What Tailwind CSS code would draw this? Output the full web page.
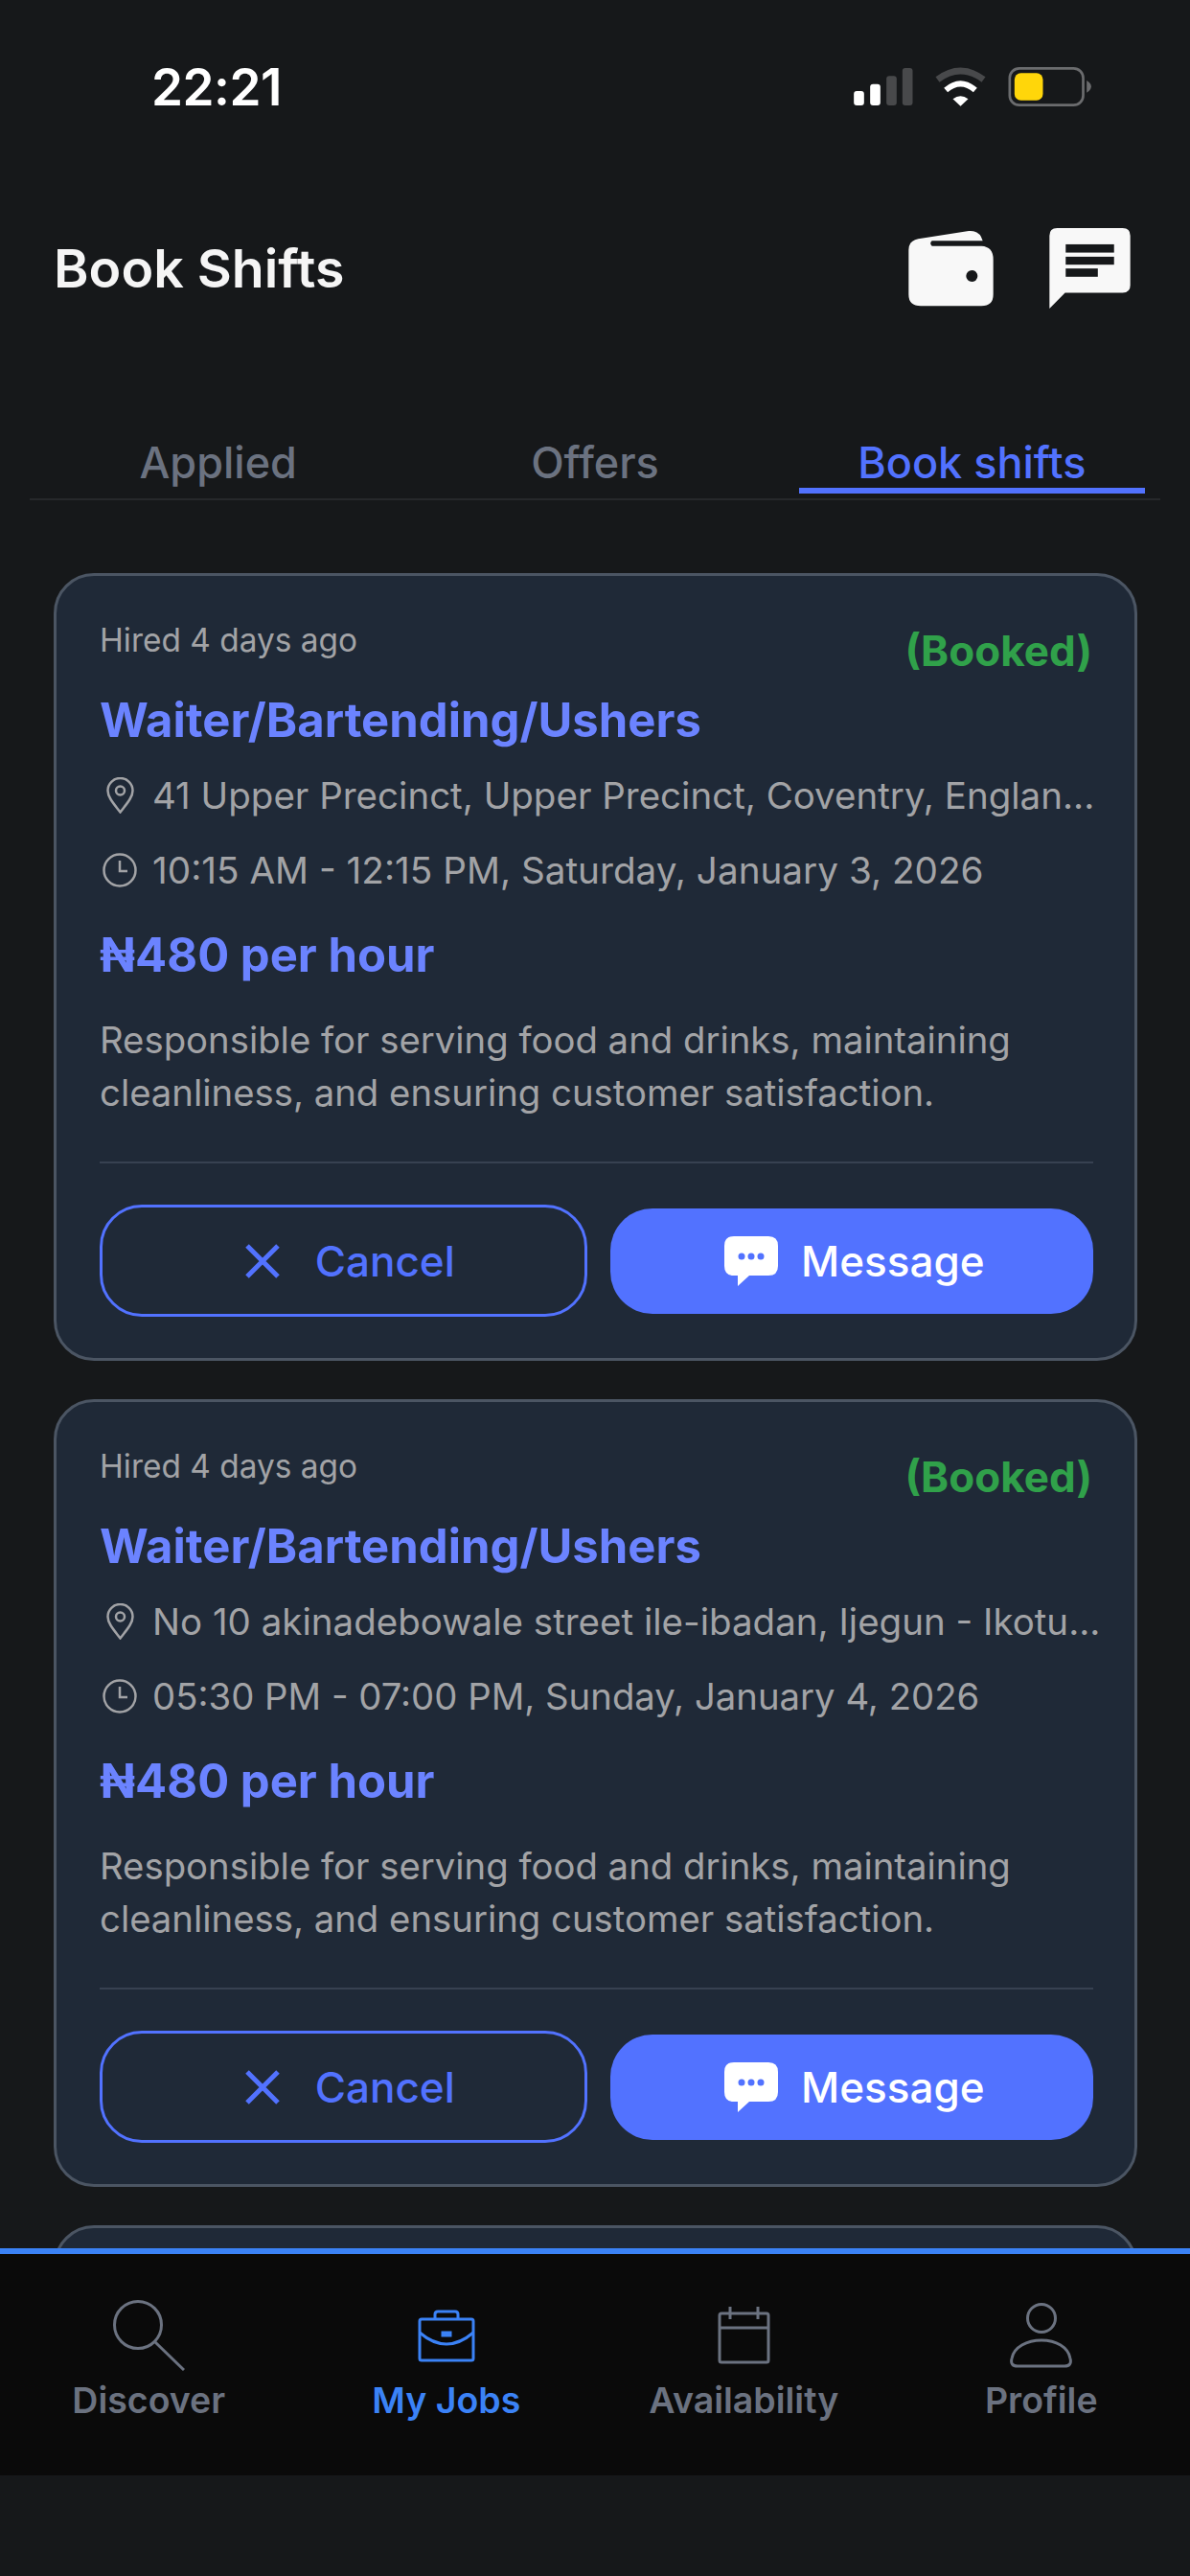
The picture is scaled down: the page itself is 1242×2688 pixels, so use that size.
<!DOCTYPE html>
<html lang="en">

<head>
  <meta charset="UTF-8">
  <meta name="viewport" content="width=device-width, initial-scale=1.0">
  <title>Book Shifts</title>
  <script src="https://cdn.jsdelivr.net/npm/@tailwindcss/browser@4"></script>
</head>

<body class="bg-[#16181a] font-['Inter',sans-serif]">
  <div class="h-[2688px] w-[1242px] flex flex-col overflow-hidden">
    <!-- Status bar -->
    <div class="h-[80px] mt-[50px] pl-[158px] pr-[103px] flex items-center justify-between shrink-0">
      <span class="text-[53px] leading-[60px] pt-[2px] font-semibold text-white tracking-[-0.5px]">22:21</span>
      <svg width="248" height="41" viewBox="93 88 743 123">
        <rect x="93" y="163" width="32" height="45" rx="9" fill="#fff"/>
        <rect x="144" y="141" width="32" height="67" rx="9" fill="#fff"/>
        <rect x="195" y="116" width="32" height="92" rx="9" fill="#48494b"/>
        <rect x="245" y="91" width="32" height="117" rx="9" fill="#48494b"/>
        <path d="M355 127 Q427 73 499 127" fill="none" stroke="#48494b" stroke-width="20"/>
        <path d="M381 160 Q427 120 473 160" fill="none" stroke="#fff" stroke-width="18"/>
        <path d="M403 188 Q427 170 451 188 L427 210 Z" fill="#fff"/>
        <rect x="581" y="92" width="230" height="115" rx="30" fill="none" stroke="#6b6c6e" stroke-width="8"/>
        <rect x="596" y="107" width="89" height="85" rx="20" fill="#ffd60a"/>
        <path d="M822 130 Q836 138 836 149 Q836 160 822 168 Z" fill="#6b6c6e"/>
      </svg>
    </div>

    <!-- Header -->
    <header class="h-[84px] mt-[108px] pl-[56px] pr-[62px] flex items-center justify-between shrink-0">
      <h1 class="text-[55.5px] leading-[60px] font-semibold text-[#f5f5f5]">Book Shifts</h1>
      <div class="flex items-center gap-[58px]">
        <svg width="89" height="80" viewBox="262 598 265 240">
          <path d="M262 660 Q262 632 292 626 L450 601 Q485 598 494 632 L335 632 Q326 640 335 648 L490 648 Q527 650 527 690 L527 800 Q527 836 490 836 L300 836 Q262 836 262 800 Z" fill="#f8f8f8"/>
          <circle cx="460" cy="742" r="18" fill="#16181a"/>
        </svg>
        <svg width="85" height="84" viewBox="703 590 254 253">
          <path d="M703 614 Q703 590 727 590 L933 590 Q957 590 957 614 L957 770 Q957 793 933 793 L752 793 L703 843 Z" fill="#f8f8f8"/>
          <rect x="754" y="641" width="152" height="26" fill="#16181a"/>
          <rect x="754" y="680" width="152" height="25" fill="#16181a"/>
          <rect x="754" y="717" width="101" height="26" fill="#16181a"/>
        </svg>
      </div>
    </header>

    <!-- Tabs -->
    <div class="mx-[31px] h-[200px] grid grid-cols-3 border-b-2 border-[#26282b] shrink-0">
      <div class="flex flex-col items-center justify-end pb-[5px]">
        <span class="text-[45px] leading-[52px] font-medium text-[#6b7280]">Applied</span>
        <div class="h-[6px]"></div>
      </div>
      <div class="flex flex-col items-center justify-end pb-[5px]">
        <span class="text-[45px] leading-[52px] font-medium text-[#6b7280]">Offers</span>
        <div class="h-[6px]"></div>
      </div>
      <div class="flex flex-col items-center justify-end pb-[5px]">
        <span class="text-[45px] leading-[52px] font-medium text-[#5272ff]">Book shifts</span>
        <div class="h-[6px] w-[361px] bg-[#5272ff]"></div>
      </div>
    </div>

    <!-- Shift list -->
    <main class="flex-1 overflow-hidden pt-[76px] pl-[56px] pr-[55px] flex flex-col gap-[40px]">
      <article class="shrink-0 bg-[#1f2937] border-[3px] border-[#4b5563] rounded-[42px] pt-[45px] pl-[45px] pr-[43px] pb-[43px]">
        <div class="h-[76px] flex justify-between items-start">
          <span class="text-[33.4px] leading-[44px] text-[#a2a3a6]">Hired 4 days ago</span>
          <span class="text-[44px] leading-[50px] mt-[8px] mr-[1px] font-bold text-[#30a14a]">(Booked)</span>
        </div>
        <h2 class="text-[49px] leading-[60px] font-bold text-[#6b83ff]">Waiter/Bartending/Ushers</h2>
        <div class="mt-[23px] h-[50px] flex items-center whitespace-nowrap text-[38.5px] leading-[50px] text-[#a2a3a6]">
          <svg class="ml-[7px] mr-[19px] shrink-0" width="29" height="38" viewBox="0 0 29 38" fill="none" stroke="#a2a3a6" stroke-width="2.5">
            <path d="M14.5 36.5C8 28 1.5 21 1.5 14A13 13 0 0 1 27.5 14C27.5 21 21 28 14.5 36.5Z"/>
            <circle cx="14.5" cy="14" r="4.5"/>
          </svg>
          <span>41 Upper Precinct, Upper Precinct, Coventry, Englan...</span>
        </div>
        <div class="mt-[28px] h-[50px] flex items-center whitespace-nowrap text-[38.7px] leading-[50px] text-[#a2a3a6]">
          <svg class="ml-[3px] mr-[16px] shrink-0" width="36" height="36" viewBox="0 0 36 36" fill="none" stroke="#a2a3a6" stroke-width="2.5">
            <circle cx="18" cy="18" r="16.5"/>
            <path d="M18 8V19H26"/>
          </svg>
          <span>10:15 AM - 12:15 PM, Saturday, January 3, 2026</span>
        </div>
        <p class="mt-[34px] text-[49px] leading-[60px] font-bold text-[#6b83ff]">₦480 per hour</p>
        <p class="mt-[31px] text-[38.3px] leading-[55px] text-[#a2a3a6]">Responsible for serving food and drinks, maintaining cleanliness, and ensuring customer satisfaction.</p>
        <div class="mt-[44px] h-[2px] bg-[#374151]"></div>
        <div class="mt-[43px] flex items-center gap-[24px]">
          <button class="w-[509px] h-[117px] border-[3px] border-[#5272ff] rounded-[44px] pl-[14px] flex items-center justify-center gap-[37px] text-[44px] font-medium text-[#5272ff]">
            <svg width="36" height="36" viewBox="0 0 36 36" fill="none" stroke="#5272ff" stroke-width="5"><path d="M2 2L34 34M34 2L2 34"/></svg>
            Cancel
          </button>
          <button class="w-[505px] h-[110px] bg-[#5272ff] rounded-[44px] pl-[6px] flex items-center justify-center gap-[24px] text-[44px] font-medium text-white">
            <svg width="56" height="52" viewBox="0 0 56 52"><path d="M10 0H46Q56 0 56 10V31Q56 41 46 41H26L14 52V41H10Q0 41 0 31V10Q0 0 10 0Z" fill="#fff"/><circle cx="18" cy="21" r="3.5" fill="#5272ff"/><circle cx="28" cy="21" r="3.5" fill="#5272ff"/><circle cx="38" cy="21" r="3.5" fill="#5272ff"/></svg>
            Message
          </button>
        </div>
      </article>

      <article class="shrink-0 bg-[#1f2937] border-[3px] border-[#4b5563] rounded-[42px] pt-[45px] pl-[45px] pr-[43px] pb-[43px]">
        <div class="h-[76px] flex justify-between items-start">
          <span class="text-[33.4px] leading-[44px] text-[#a2a3a6]">Hired 4 days ago</span>
          <span class="text-[44px] leading-[50px] mt-[8px] mr-[1px] font-bold text-[#30a14a]">(Booked)</span>
        </div>
        <h2 class="text-[49px] leading-[60px] font-bold text-[#6b83ff]">Waiter/Bartending/Ushers</h2>
        <div class="mt-[23px] h-[50px] flex items-center whitespace-nowrap text-[38.5px] leading-[50px] text-[#a2a3a6]">
          <svg class="ml-[7px] mr-[19px] shrink-0" width="29" height="38" viewBox="0 0 29 38" fill="none" stroke="#a2a3a6" stroke-width="2.5">
            <path d="M14.5 36.5C8 28 1.5 21 1.5 14A13 13 0 0 1 27.5 14C27.5 21 21 28 14.5 36.5Z"/>
            <circle cx="14.5" cy="14" r="4.5"/>
          </svg>
          <span>No 10 akinadebowale street ile-ibadan, Ijegun - Ikotu...</span>
        </div>
        <div class="mt-[28px] h-[50px] flex items-center whitespace-nowrap text-[38.3px] leading-[50px] text-[#a2a3a6]">
          <svg class="ml-[3px] mr-[16px] shrink-0" width="36" height="36" viewBox="0 0 36 36" fill="none" stroke="#a2a3a6" stroke-width="2.5">
            <circle cx="18" cy="18" r="16.5"/>
            <path d="M18 8V19H26"/>
          </svg>
          <span>05:30 PM - 07:00 PM, Sunday, January 4, 2026</span>
        </div>
        <p class="mt-[34px] text-[49px] leading-[60px] font-bold text-[#6b83ff]">₦480 per hour</p>
        <p class="mt-[31px] text-[38.3px] leading-[55px] text-[#a2a3a6]">Responsible for serving food and drinks, maintaining cleanliness, and ensuring customer satisfaction.</p>
        <div class="mt-[44px] h-[2px] bg-[#374151]"></div>
        <div class="mt-[43px] flex items-center gap-[24px]">
          <button class="w-[509px] h-[117px] border-[3px] border-[#5272ff] rounded-[44px] pl-[14px] flex items-center justify-center gap-[37px] text-[44px] font-medium text-[#5272ff]">
            <svg width="36" height="36" viewBox="0 0 36 36" fill="none" stroke="#5272ff" stroke-width="5"><path d="M2 2L34 34M34 2L2 34"/></svg>
            Cancel
          </button>
          <button class="w-[505px] h-[110px] bg-[#5272ff] rounded-[44px] pl-[6px] flex items-center justify-center gap-[24px] text-[44px] font-medium text-white">
            <svg width="56" height="52" viewBox="0 0 56 52"><path d="M10 0H46Q56 0 56 10V31Q56 41 46 41H26L14 52V41H10Q0 41 0 31V10Q0 0 10 0Z" fill="#fff"/><circle cx="18" cy="21" r="3.5" fill="#5272ff"/><circle cx="28" cy="21" r="3.5" fill="#5272ff"/><circle cx="38" cy="21" r="3.5" fill="#5272ff"/></svg>
            Message
          </button>
        </div>
      </article>

      <article class="shrink-0 h-[200px] bg-[#1f2937] border-[3px] border-[#4b5563] rounded-[42px]"></article>
    </main>

    <!-- Bottom nav -->
    <nav class="h-[237px] shrink-0 border-t-[6px] border-[#3b82f6] bg-[#0a0a0a] grid grid-cols-4 pt-[48px] text-[37.5px] leading-[44px] font-semibold text-[#6b7280]">
      <div class="flex flex-col items-center">
        <div class="h-[74px] flex items-center">
          <svg width="75" height="74" viewBox="0 0 75 74" fill="none" stroke="#6b7280" stroke-width="3"><circle cx="26" cy="26" r="24.5"/><path d="M44 44L74 73"/></svg>
        </div>
        <span class="mt-[9px]">Discover</span>
      </div>
      <div class="flex flex-col items-center text-[#3b82f6]">
        <div class="h-[74px] flex items-center">
          <svg width="60" height="55" viewBox="0 0 60 55" fill="none" stroke="#3b82f6" stroke-width="3"><rect x="2" y="10" width="56" height="43" rx="2"/><path d="M18 10V5Q18 2 21 2H39Q42 2 42 5V10"/><path d="M2 24Q30 48 58 24"/><rect x="26" y="24" width="8" height="3" fill="#3b82f6"/></svg>
        </div>
        <span class="mt-[9px]">My Jobs</span>
      </div>
      <div class="flex flex-col items-center">
        <div class="h-[74px] flex items-center">
          <svg width="55" height="60" viewBox="0 0 55 60" fill="none" stroke="#6b7280" stroke-width="3"><rect x="2" y="7" width="51" height="51" rx="2"/><path d="M2 22H53M13 0V13M42 0V13"/></svg>
        </div>
        <span class="mt-[9px]">Availability</span>
      </div>
      <div class="flex flex-col items-center">
        <div class="h-[74px] flex items-center">
          <svg width="65" height="68" viewBox="0 0 65 68" fill="none" stroke="#6b7280" stroke-width="3"><circle cx="33" cy="16" r="14.5"/><path d="M8 66Q0 66 2 58C4 46 18 39 33 39C48 39 61 46 63 58Q65 66 57 66Z"/></svg>
        </div>
        <span class="mt-[9px]">Profile</span>
      </div>
    </nav>
    <div class="h-[105px] shrink-0"></div>
  </div>
</body>

</html>
